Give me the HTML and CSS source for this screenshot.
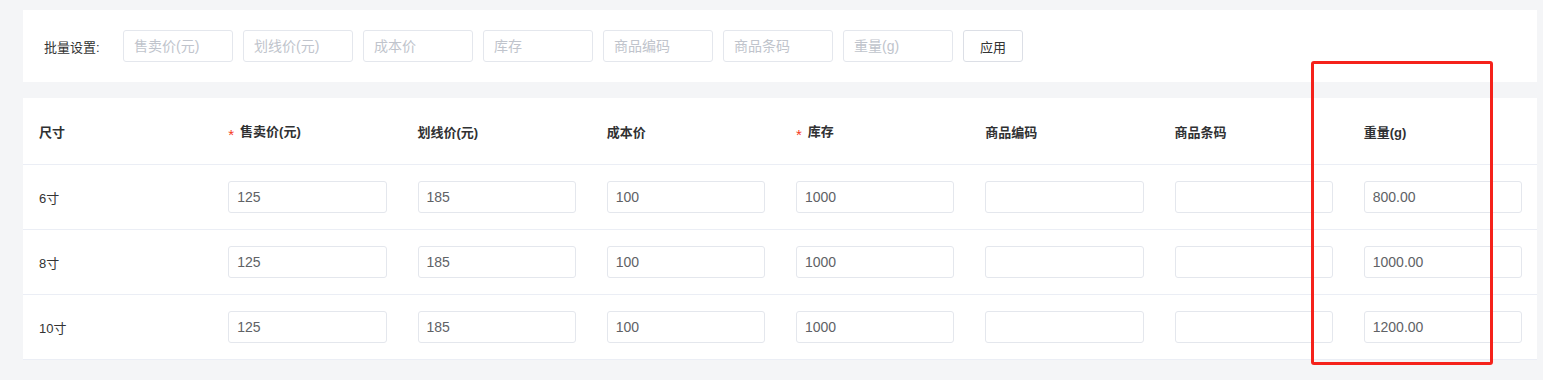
FILE: index.html
```html
<!DOCTYPE html>
<html lang="zh-CN">
<head>
    <meta charset="UTF-8">
    <meta name="viewport" content="width=device-width, initial-scale=1.0">
    <title>规格设置</title>
    <link rel="stylesheet" href="styles.css">
</head>
<body>

    <div class="batch-box">
        <span class="batch-label">批量设置:</span>
        <input class="batch-input" type="text" placeholder="售卖价(元)">
        <input class="batch-input" type="text" placeholder="划线价(元)">
        <input class="batch-input" type="text" placeholder="成本价">
        <input class="batch-input" type="text" placeholder="库存">
        <input class="batch-input" type="text" placeholder="商品编码">
        <input class="batch-input" type="text" placeholder="商品条码">
        <input class="batch-input" type="text" placeholder="重量(g)">
        <button class="btn-apply">应用</button>
    </div>

    <div class="sku-box">
        <table class="sku-table">
            <thead>
                <tr>
                    <th>尺寸</th>
                    <th><span class="req">*</span>售卖价(元)</th>
                    <th>划线价(元)</th>
                    <th>成本价</th>
                    <th><span class="req">*</span>库存</th>
                    <th>商品编码</th>
                    <th>商品条码</th>
                    <th>重量(g)</th>
                </tr>
            </thead>
            <tbody>
                <tr>
                    <td>6寸</td>
                    <td><input class="cell-input" type="text" value="125"></td>
                    <td><input class="cell-input" type="text" value="185"></td>
                    <td><input class="cell-input" type="text" value="100"></td>
                    <td><input class="cell-input" type="text" value="1000"></td>
                    <td><input class="cell-input" type="text" value=""></td>
                    <td><input class="cell-input" type="text" value=""></td>
                    <td><input class="cell-input" type="text" value="800.00"></td>
                </tr>
                <tr>
                    <td>8寸</td>
                    <td><input class="cell-input" type="text" value="125"></td>
                    <td><input class="cell-input" type="text" value="185"></td>
                    <td><input class="cell-input" type="text" value="100"></td>
                    <td><input class="cell-input" type="text" value="1000"></td>
                    <td><input class="cell-input" type="text" value=""></td>
                    <td><input class="cell-input" type="text" value=""></td>
                    <td><input class="cell-input" type="text" value="1000.00"></td>
                </tr>
                <tr>
                    <td>10寸</td>
                    <td><input class="cell-input" type="text" value="125"></td>
                    <td><input class="cell-input" type="text" value="185"></td>
                    <td><input class="cell-input" type="text" value="100"></td>
                    <td><input class="cell-input" type="text" value="1000"></td>
                    <td><input class="cell-input" type="text" value=""></td>
                    <td><input class="cell-input" type="text" value=""></td>
                    <td><input class="cell-input" type="text" value="1200.00"></td>
                </tr>
            </tbody>
        </table>
    </div>

    <!-- 标注框 -->
    <div class="mark-box"></div>

</body>
</html>
```

FILE: styles.css
```css
body {
    font-family: "Liberation Sans", "Noto Sans CJK SC", sans-serif;
    font-size: 13px;
    color: #333;
    background-color: #f4f5f7;
    margin: 0;
    padding: 10px 6px 0 23px;
    height: 380px;
    box-sizing: border-box;
    overflow: hidden;
}
.batch-box {
    background-color: white;
    height: 72px;
    padding: 0 21px;
    display: flex;
    align-items: center;
    gap: 10px;
    box-sizing: border-box;
}
.batch-label {
    flex: 0 0 69px;
    color: #333;
}
.batch-input {
    width: 110px;
    height: 32px;
    box-sizing: border-box;
    border: 1px solid #e4e7ed;
    border-radius: 3px;
    padding: 0 10px;
    font-family: inherit;
    font-size: 14px;
    color: #606266;
    outline: none;
}
.batch-input::placeholder {
    color: #c0c4cc;
}
.btn-apply {
    width: 60px;
    height: 32px;
    background-color: white;
    border: 1px solid #dcdfe6;
    border-radius: 3px;
    font-family: inherit;
    font-size: 13px;
    color: #333;
    padding: 0;
    cursor: pointer;
}
.sku-box {
    background-color: white;
    margin-top: 16px;
}
.sku-table {
    width: 100%;
    table-layout: fixed;
    border-collapse: collapse;
}
.sku-table th,
.sku-table td {
    padding: 0 15px 0 16px;
    text-align: left;
    border-bottom: 1px solid #ebeef5;
}
.sku-table th {
    height: 66px;
    font-weight: bold;
    color: #303133;
}
.sku-table td {
    height: 64px;
    color: #333;
}
.req {
    display: inline-block;
    color: #f5391b;
    font-weight: normal;
    font-size: 15px;
    margin-right: 6px;
    vertical-align: -4px;
    line-height: 1;
}
.cell-input {
    display: block;
    width: 100%;
    height: 32px;
    box-sizing: border-box;
    border: 1px solid #e4e7ed;
    border-radius: 3px;
    padding: 0 8px;
    font-family: inherit;
    font-size: 14px;
    color: #606266;
    outline: none;
}
.mark-box {
    position: absolute;
    left: 1311px;
    top: 61px;
    width: 182px;
    height: 304px;
    box-sizing: border-box;
    border: 3px solid #f5221b;
    border-radius: 3px;
    pointer-events: none;
}
```
